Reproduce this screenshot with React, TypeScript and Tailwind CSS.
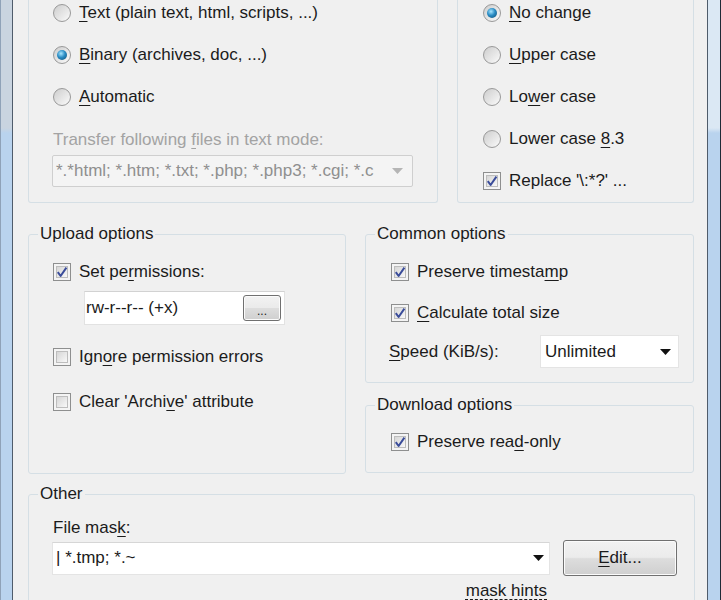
import type { ReactNode } from 'react'

function K({ children }: { children: ReactNode }) {
  return <span className="underline decoration-1 underline-offset-[3px]">{children}</span>
}

function CheckBox({ checked }: { checked?: boolean }) {
  return (
    <span className="relative flex h-[18px] w-[18px] shrink-0 items-center justify-center border border-[#8e8f8f] bg-[#f4f4f4]">
      <span className="absolute inset-[2px] border border-[#bdbdbd] bg-gradient-to-br from-[#d6d6d6] to-[#f8f8f8]" />
      {checked && (
        <svg className="relative" width="12" height="12" viewBox="0 0 12 12">
          <path d="M1.8 6.2 L4.6 10 L10.4 1.6" stroke="#3a4c9a" strokeWidth="2" fill="none" strokeLinejoin="round" />
        </svg>
      )}
    </span>
  )
}

function Radio({ on }: { on?: boolean }) {
  return (
    <span className="flex h-[18px] w-[18px] shrink-0 items-center justify-center rounded-full border border-[#999] bg-gradient-to-br from-[#cdcdcd] to-[#fbfbfb]">
      {on && (
        <span className="h-[10px] w-[10px] rounded-full bg-[radial-gradient(circle_at_40%_35%,#a8e6ff_0%,#2a8cc4_45%,#0e4a70_100%)]" />
      )}
    </span>
  )
}

function Opt({ radio, on, children, className = '' }: { radio?: boolean; on?: boolean; children: ReactNode; className?: string }) {
  return (
    <div className={`flex items-center gap-[8px] ${className}`}>
      {radio ? <Radio on={on} /> : <CheckBox checked={on} />}
      <span className="whitespace-nowrap leading-[20px]">{children}</span>
    </div>
  )
}

function Arrow({ gray }: { gray?: boolean }) {
  return (
    <svg width="11" height="6" viewBox="0 0 11 6" className="shrink-0">
      <path d="M0 0 H11 L5.5 6 Z" fill={gray ? '#b5b5b5' : '#111'} />
    </svg>
  )
}

function Group({ title, className = '', children }: { title: string; className?: string; children: ReactNode }) {
  return (
    <fieldset className={`rounded-[3px] border border-[#d5dfe5] pl-[9px] ${className}`}>
      <legend className="px-[2px] leading-[20px]">{title}</legend>
      {children}
    </fieldset>
  )
}

const btn =
  'flex items-center justify-center rounded-[3px] border border-[#707070] shadow-[inset_0_0_0_1px_#fbfbfb] bg-[linear-gradient(to_bottom,#f2f2f2_0%,#ebebeb_48%,#dddddd_52%,#cfcfcf_100%)]'

export default function App() {
  return (
    <div className="flex h-[600px] w-[721px] overflow-hidden font-['Liberation_Sans',Arial,sans-serif] text-[17px] text-[#1b1b1b]">
      <div className="w-[13px] shrink-0 border-l border-r border-l-[#8fa2b8] border-r-[#4f5c6b] bg-[linear-gradient(to_bottom,#c9d4e0_0px,#c9d4e0_128px,#b9d3ee_133px,#b9d3ee_100%)]" />

      <div className="flex w-[694px] shrink-0 flex-col bg-[#f0f0f0] pl-[15px]">
        <div className="-mt-[8px] flex h-[218px] gap-[19px]">
          <div className="flex w-[410px] flex-col rounded-b-[3px] border border-t-0 border-[#d5dfe5] pl-[24px]">
            <Opt radio className="h-[42px]"><K>T</K>ext (plain text, html, scripts, ...)</Opt>
            <Opt radio on className="h-[42px]"><K>B</K>inary (archives, doc, ...)</Opt>
            <Opt radio className="h-[42px]"><K>A</K>utomatic</Opt>
            <div className="mt-[12px] h-[20px] leading-[20px] text-[#a3a3a3]">
              Transfer following <K>f</K>iles in text mode:
            </div>
            <div className="-ml-[1px] mt-[5px] flex h-[32px] w-[361px] items-center rounded-[2px] border border-[#cfcfcf] bg-[#f4f4f4] text-[#8f8f8f]">
              <div className="w-[330px] overflow-hidden whitespace-nowrap pl-[3px]">*.*html; *.htm; *.txt; *.php; *.php3; *.cgi; *.c</div>
              <div className="flex flex-1 items-center justify-center">
                <Arrow gray />
              </div>
            </div>
          </div>

          <div className="flex w-[237px] flex-col rounded-b-[3px] border border-t-0 border-[#d5dfe5] pl-[25px]">
            <Opt radio on className="h-[42px]"><K>N</K>o change</Opt>
            <Opt radio className="h-[42px]"><K>U</K>pper case</Opt>
            <Opt radio className="h-[42px]">Lo<K>w</K>er case</Opt>
            <Opt radio className="h-[42px]">Lower case <K>8</K>.3</Opt>
            <Opt on className="h-[42px]">Replace '\:*?' ...</Opt>
          </div>
        </div>

        <div className="mt-[21px] flex gap-[19px]">
          <Group title="Upload options" className="h-[250px] w-[318px]">
            <div className="ml-[15px] flex flex-col pt-[16px]">
              <Opt on className="h-[24px]">Set pe<K>r</K>missions:</Opt>
              <div className="ml-[31px] mt-[7px] flex h-[34px] w-[201px] items-center justify-between border border-[#e2e2e2] border-t-[#d2d2d2] bg-white pl-[1px] pr-[3px]">
                <span className="whitespace-nowrap">rw-r--r-- (+x)</span>
                <div className={`${btn} h-[26px] w-[38px] items-end pb-[3px] text-[12px] leading-none`}>...</div>
              </div>
              <Opt className="mt-[20px] h-[24px]">Ign<K>o</K>re permission errors</Opt>
              <Opt className="mt-[21px] h-[24px]">Clear 'Archi<K>v</K>e' attribute</Opt>
            </div>
          </Group>

          <div className="flex w-[329px] flex-col">
            <Group title="Common options" className="h-[159px]">
              <div className="ml-[14px] flex flex-col pt-[16px]">
                <Opt on className="ml-[2px] h-[24px]">Preserve timesta<K>m</K>p</Opt>
                <Opt on className="ml-[2px] mt-[17px] h-[24px]"><K>C</K>alculate total size</Opt>
                <div className="mt-[10px] flex h-[33px] items-center">
                  <span className="w-[151px] whitespace-nowrap"><K>S</K>peed (KiB/s):</span>
                  <div className="flex h-[33px] w-[139px] items-center justify-between border border-[#e4e4e4] bg-white pl-[4px] pr-[7px]">
                    <span>Unlimited</span>
                    <Arrow />
                  </div>
                </div>
              </div>
            </Group>
            <Group title="Download options" className="mt-[12px] h-[78px]">
              <div className="ml-[16px] pt-[15px]">
                <Opt on className="h-[24px]">Preserve rea<K>d</K>-only</Opt>
              </div>
            </Group>
          </div>
        </div>

        <Group title="Other" className="mt-[10px] h-[140px] w-[667px] shrink-0">
          <div className="ml-[14px] flex flex-col pt-[14px]">
            <div className="h-[20px] pl-[1px] leading-[20px]">File mas<K>k</K>:</div>
            <div className="mt-[2px] flex h-[36px] items-center gap-[13px]">
              <div className="flex h-[33px] w-[498px] items-center justify-between border border-[#e4e4e4] border-t-[#d6d6d6] bg-white pl-[3px] pr-[5px]">
                <span className="whitespace-nowrap">| *.tmp; *.~</span>
                <Arrow />
              </div>
              <div className={`${btn} h-[36px] w-[114px]`}>
                <span><K>E</K>dit...</span>
              </div>
            </div>
            <div className="mt-[5px] flex w-[498px] justify-end pr-[3px]">
              <span className="leading-[20px] underline decoration-dashed decoration-1 underline-offset-[3px]">mask hints</span>
            </div>
          </div>
        </Group>
      </div>

      <div className="w-[14px] shrink-0 border-l border-r border-l-[#4f5c6b] border-r-[#1f2a36] bg-[linear-gradient(to_bottom,#dbe8f4_0px,#dbe8f4_128px,#b9d3ee_133px,#b9d3ee_100%)]" />
    </div>
  )
}
